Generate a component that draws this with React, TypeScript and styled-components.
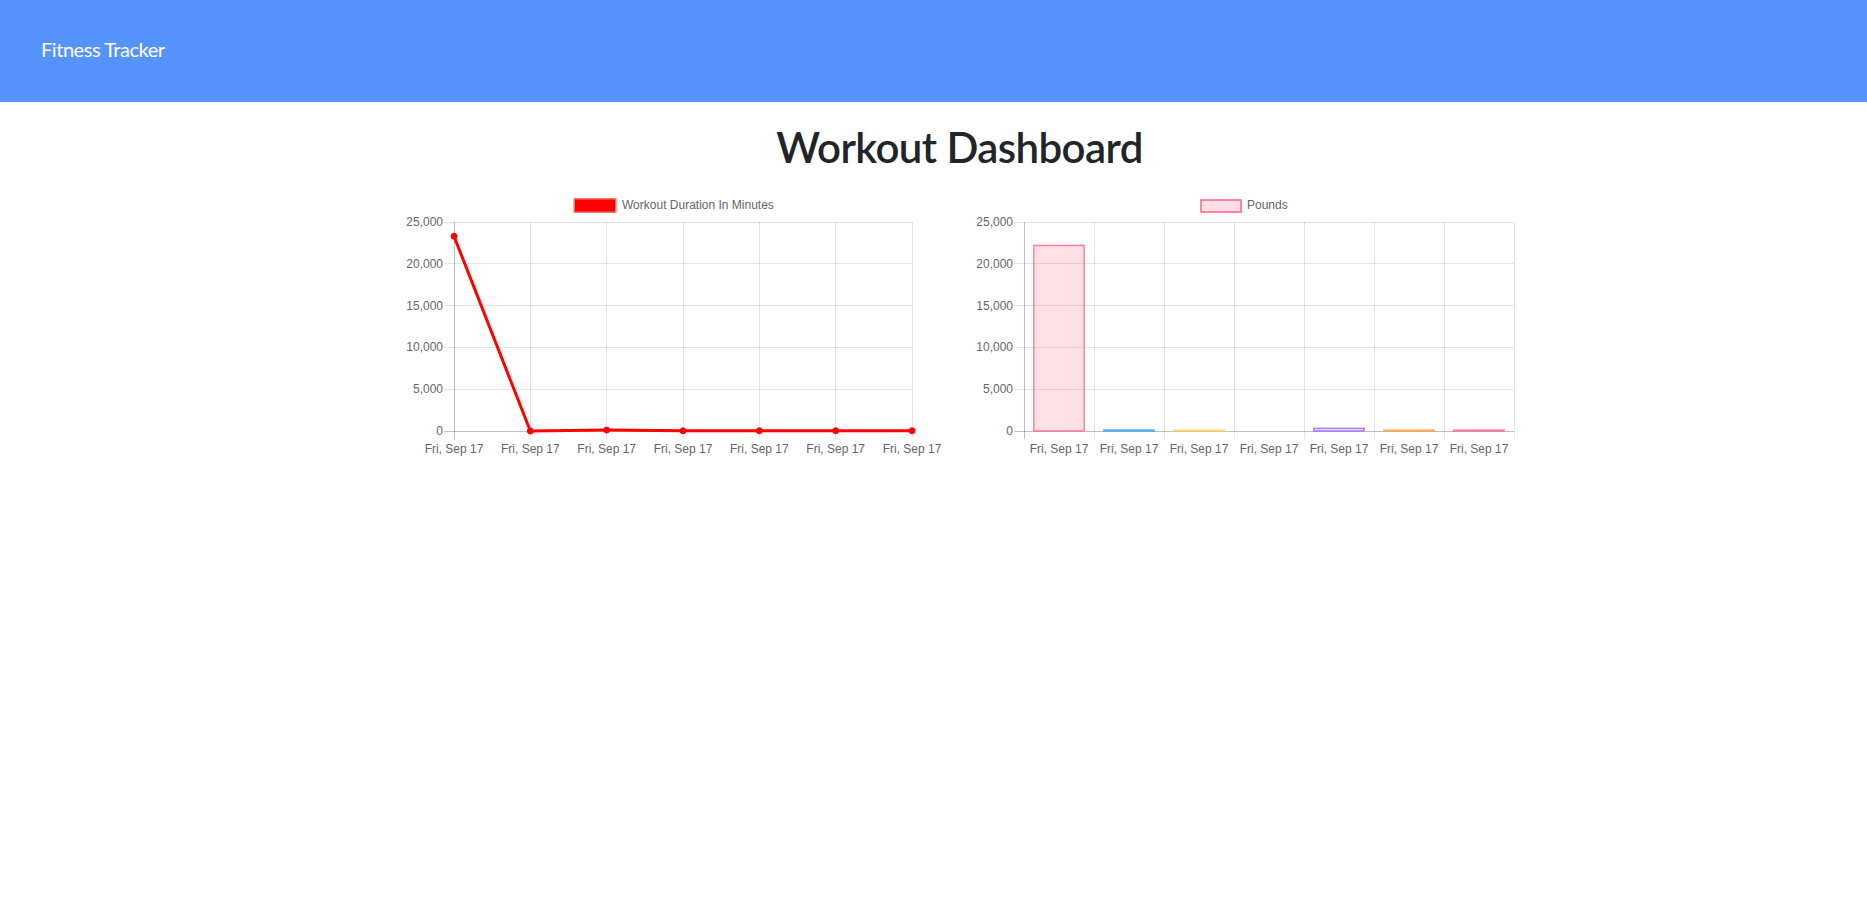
import React from 'react';
import styled, { createGlobalStyle } from 'styled-components';

const GlobalStyle = createGlobalStyle`
  html, body { margin: 0; padding: 0; background: #ffffff; }
  body { font-family: Lato, "Open Sans", sans-serif; }
`;

const Header = styled.header`
  height: 102px;
  box-sizing: border-box;
  background: #5593ff;
  display: flex;
  align-items: center;
  padding: 0 0 4px 41px;
`;

const Brand = styled.span`
  color: #ffffff;
  font-family: Lato, "Open Sans", sans-serif;
  font-size: 20px;
  line-height: 30px;
  letter-spacing: -0.45px;
`;

const Main = styled.main`
  padding-left: 52px;
  display: flex;
  flex-direction: column;
  align-items: center;
`;

const Title = styled.h1`
  margin: 20px 0 0;
  font-family: Lato, "Open Sans", sans-serif;
  font-size: 42px;
  line-height: 50px;
  font-weight: 600;
  color: #212529;
  letter-spacing: -0.6px;
`;

const ChartsRow = styled.div`
  display: flex;
  gap: 11px;
  margin-top: 18px;
`;

const ChartSvg = styled.svg`
  display: block;
  width: 560px;
  height: 270px;
  overflow: visible;
  font-family: "Liberation Sans", Arial, Helvetica, sans-serif;
  font-size: 12px;
`;

const TOP = 32;
const BOTTOM = 241;
const MAX = 25000;
const Y_TICKS = [25000, 20000, 15000, 10000, 5000, 0];
const GRID = 'rgba(0,0,0,0.1)';
const ZERO = 'rgba(0,0,0,0.25)';
const TEXT = '#666666';
const LABEL = 'Fri, Sep 17';

const yFor = (v: number) => BOTTOM - (v / MAX) * (BOTTOM - TOP);
const fmt = (v: number) => v.toLocaleString('en-US');

type YAxisProps = { left: number; right: number };
const YGrid: React.FC<YAxisProps> = ({ left, right }) => (
  <g>
    {Y_TICKS.map((t) => (
      <g key={t}>
        <line
          x1={left - 10}
          x2={right}
          y1={yFor(t)}
          y2={yFor(t)}
          stroke={t === 0 ? ZERO : GRID}
          strokeWidth={1}
          shapeRendering="crispEdges"
        />
        <text x={left - 11} y={yFor(t) + 4} textAnchor="end" fill={TEXT}>
          {fmt(t)}
        </text>
      </g>
    ))}
  </g>
);

const lineData = [23300, 0, 110, 20, 30, 40, 25];

const LineChart: React.FC = () => {
  const left = 60;
  const right = 518;
  const step = (right - left) / (lineData.length - 1);
  const pts = lineData.map((v, i) => [left + i * step, yFor(v)] as const);
  return (
    <ChartSvg viewBox="0 0 560 270">
      <rect x={181} y={9.5} width={40} height={12} fill="#ff0000" stroke="rgba(255,0,0,0.55)" strokeWidth={3} />
      <text x={228} y={19} fill={TEXT}>Workout Duration In Minutes</text>
      {pts.map(([x], i) => (
        <line
          key={i}
          x1={x}
          x2={x}
          y1={TOP}
          y2={BOTTOM + 8}
          stroke={i === 0 ? ZERO : GRID}
          strokeWidth={1}
          shapeRendering="crispEdges"
        />
      ))}
      <YGrid left={left} right={right} />
      {pts.map(([x], i) => (
        <text key={i} x={x} y={263} textAnchor="middle" fill={TEXT}>
          {LABEL}
        </text>
      ))}
      <polyline
        points={pts.map(([x, y]) => `${x},${y}`).join(' ')}
        fill="none"
        stroke="#ff0000"
        strokeWidth={3}
        strokeLinejoin="round"
      />
      {pts.map(([x, y], i) => (
        <circle key={i} cx={x} cy={y} r={3} fill="#ff0000" stroke="#ff0000" strokeWidth={1} />
      ))}
    </ChartSvg>
  );
};

const barData: { v: number; c: string }[] = [
  { v: 22200, c: '255,99,132' },
  { v: 120, c: '54,162,235' },
  { v: 100, c: '255,206,86' },
  { v: 0, c: '75,192,192' },
  { v: 320, c: '153,102,255' },
  { v: 110, c: '255,159,64' },
  { v: 110, c: '255,99,132' },
];

const BarChart: React.FC = () => {
  const left = 59;
  const cat = 70;
  const right = left + cat * barData.length;
  const barW = cat * 0.72;
  return (
    <ChartSvg viewBox="0 0 560 270">
      <rect
        x={236}
        y={10}
        width={40}
        height={12}
        fill="rgba(255,99,132,0.2)"
        stroke="rgba(255,99,132,1)"
        strokeWidth={1.5}
      />
      <text x={282} y={19} fill={TEXT}>Pounds</text>
      {Array.from({ length: barData.length + 1 }).map((_, i) => (
        <line
          key={i}
          x1={left + i * cat}
          x2={left + i * cat}
          y1={TOP}
          y2={BOTTOM + 8}
          stroke={i === 0 ? ZERO : GRID}
          strokeWidth={1}
          shapeRendering="crispEdges"
        />
      ))}
      <YGrid left={left} right={right} />
      {barData.map((b, i) => {
        const cx = left + cat * i + cat / 2;
        const y = yFor(b.v);
        return (
          <g key={i}>
            {b.v > 0 && (
              <rect
                x={cx - barW / 2}
                y={y}
                width={barW}
                height={BOTTOM - y}
                fill={`rgba(${b.c},0.2)`}
                stroke={`rgba(${b.c},0.8)`}
                strokeWidth={1.5}
              />
            )}
            <text x={cx} y={263} textAnchor="middle" fill={TEXT}>
              {LABEL}
            </text>
          </g>
        );
      })}
    </ChartSvg>
  );
};

export default function App() {
  return (
    <>
      <GlobalStyle />
      <Header>
        <Brand>Fitness Tracker</Brand>
      </Header>
      <Main>
        <Title>Workout Dashboard</Title>
        <ChartsRow>
          <LineChart />
          <BarChart />
        </ChartsRow>
      </Main>
    </>
  );
}
